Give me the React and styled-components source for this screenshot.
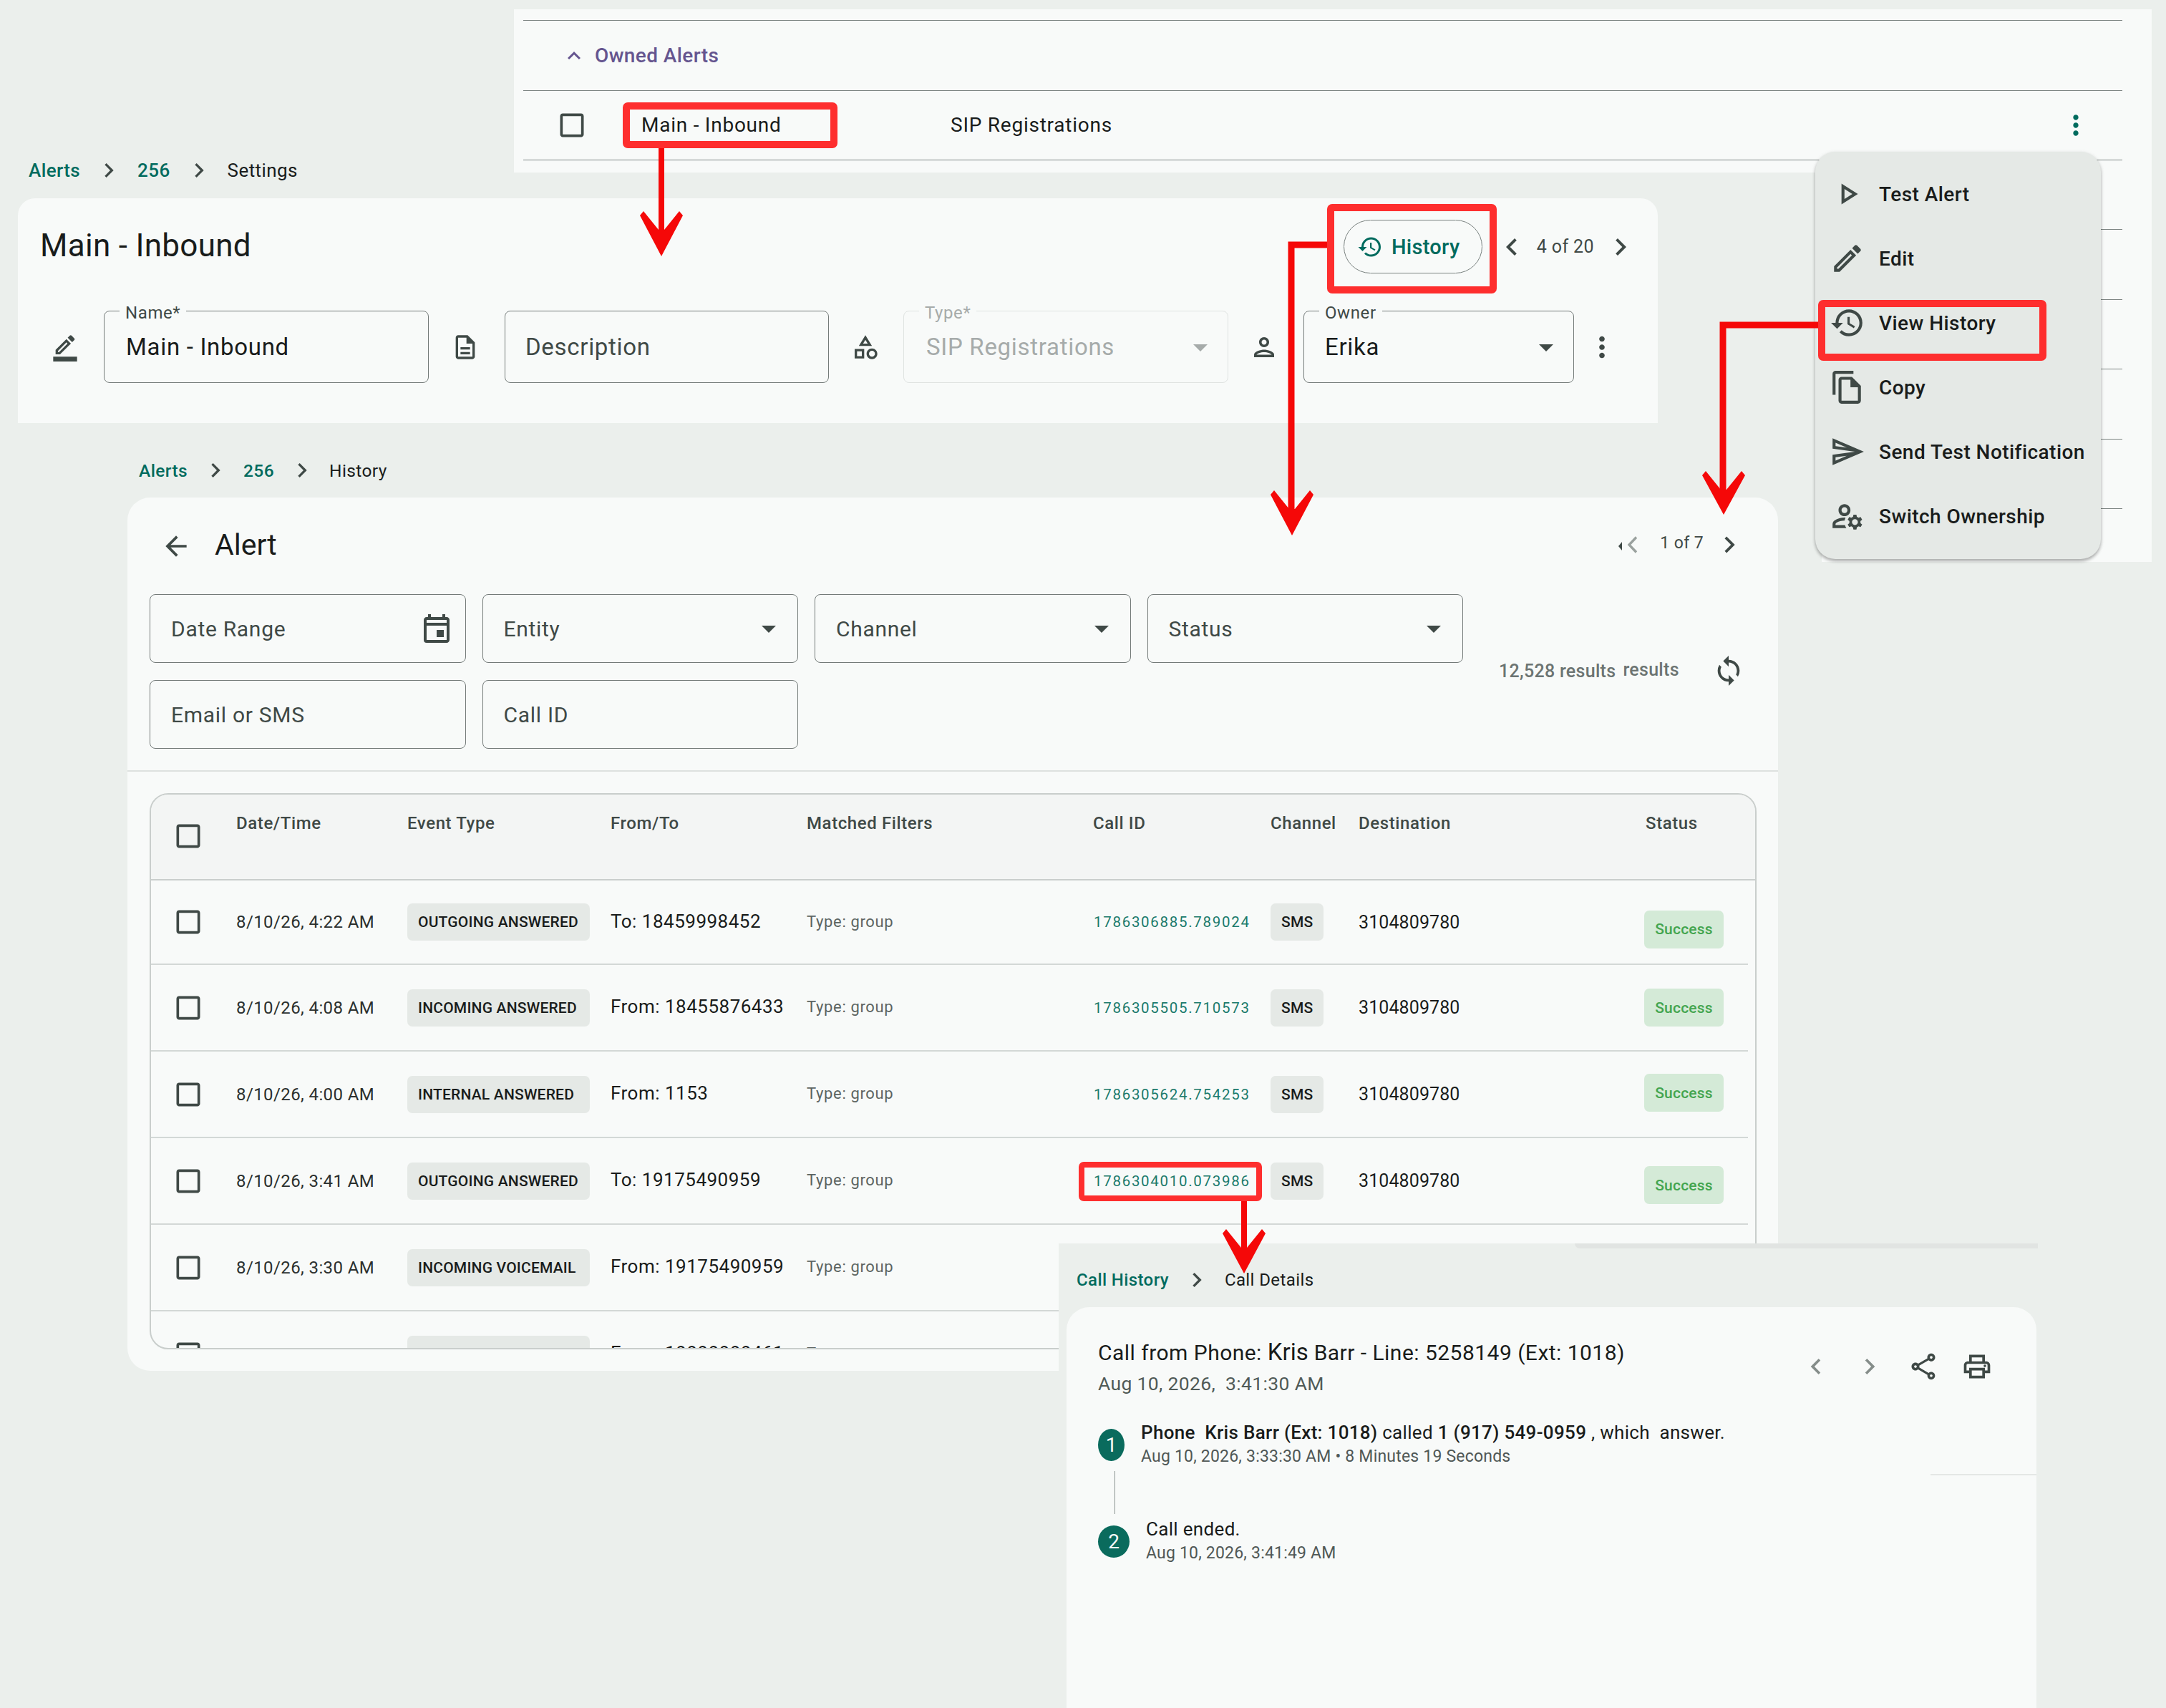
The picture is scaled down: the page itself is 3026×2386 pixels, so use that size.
import React from 'react';
import styled, { createGlobalStyle } from 'styled-components';
import {
  MdExpandLess, MdMoreVert, MdCheckBoxOutlineBlank, MdChevronLeft, MdChevronRight, MdHistory,
  MdOutlineBorderColor, MdOutlineDescription, MdOutlineCategory, MdOutlinePerson, MdArrowDropDown,
  MdArrowBack, MdOutlineEvent, MdSync, MdOutlineShare, MdOutlinePrint, MdOutlinePlayArrow, MdOutlineEdit,
  MdOutlineFileCopy, MdOutlineSend, MdOutlineManageAccounts,
} from 'react-icons/md';

const Global = createGlobalStyle`
  html, body { margin: 0; padding: 0; background: #ebefec; }
  body { font-family: Roboto, "Liberation Sans", sans-serif; color: #191c1b; }
  * { box-sizing: border-box; }
`;

const Canvas = styled.div`
  position: relative;
  width: 3026px;
  height: 2386px;
  overflow: hidden;
  background: #ebefec;
`;

/* Each window is a pasted screenshot on a free canvas */
const Window = styled.section`
  position: absolute;
  left: ${(p) => p.$x}px;
  top: ${(p) => p.$y}px;
  width: ${(p) => p.$w}px;
  height: ${(p) => p.$h}px;
  display: flex;
  flex-direction: column;
  background: ${(p) => p.$bg || 'transparent'};
`;

const Crumbs = styled.nav`
  display: flex;
  align-items: center;
  height: 44px;
  flex: none;
  font-size: ${(p) => p.$size || 26}px;
  letter-spacing: 0.4px;
  padding-left: ${(p) => p.$pad || 0}px;
  margin-top: ${(p) => p.$mt || 0}px;
  margin-bottom: ${(p) => p.$mb ?? 15}px;
`;
const CrumbLink = styled.span`
  color: #006b5e;
  font-weight: 500;
`;
const CrumbNow = styled.span`
  color: #191c1b;
`;
const CrumbSep = styled(MdChevronRight)`
  color: #3f4946;
  font-size: 40px;
  margin: 0 ${(p) => p.$m || 20}px;
`;

/* Owned alerts list */
const ListRule = styled.div`
  height: 16px;
  flex: none;
  margin: 0 41px 0 13px;
  border-bottom: 1.5px solid #7d8583;
`;
const SectionRow = styled.div`
  height: 98px;
  flex: none;
  margin: 0 41px 0 13px;
  display: flex;
  align-items: center;
  padding-left: 53px;
  gap: 11px;
  border-bottom: 1.5px solid #7d8583;
  color: #65558f;
  font-size: 28px;
  font-weight: 500;
  letter-spacing: 0.4px;
`;
const SectionCaret = styled(MdExpandLess)`
  font-size: 36px;
  color: #65558f;
`;
const ListRow = styled.div`
  height: 97px;
  flex: none;
  margin: 0 41px 0 13px;
  display: flex;
  align-items: center;
  border-bottom: 1.5px solid #7d8583;
  font-size: 28px;
  letter-spacing: 0.75px;
`;
const ListCheck = styled(MdCheckBoxOutlineBlank)`
  font-size: 44px;
  color: #3f4946;
  margin-left: 46px;
`;
const ListName = styled.span`
  margin: -2px 0 0 75px;
  width: 432px;
`;
const ListKind = styled.span`
  flex: 1;
  margin-top: -2px;
`;
const ListMore = styled(MdMoreVert)`
  font-size: 44px;
  color: #006b5e;
  margin-right: 43px;
`;
const TailRow = styled.div`
  height: ${(p) => (p.$first ? 80 : 97.5)}px;
  flex: none;
  margin-right: 41px;
  border-bottom: 1.5px solid #7d8583;
`;

/* Context menu */
const Menu = styled.ul`
  position: absolute;
  left: 2536px;
  top: 212px;
  width: 399px;
  height: 569px;
  margin: 0;
  padding: 14px 0;
  list-style: none;
  background: #e5e9e6;
  border-radius: 28px;
  box-shadow: 0 3px 4px rgba(0, 0, 0, 0.28), 0 1px 6px rgba(0, 0, 0, 0.08);
`;
const MenuItem = styled.li`
  height: 90px;
  display: flex;
  align-items: center;
  padding-left: 20px;
  gap: 19px;
  font-size: 28px;
  font-weight: 500;
  letter-spacing: 0.45px;
  color: #191c1b;
  & > svg {
    font-size: 50px;
    color: #3f4946;
    flex: none;
  }
`;

/* Panels */
const Panel = styled.div`
  background: #f8faf9;
  border-radius: ${(p) => p.$radius || '32px'};
  display: flex;
  flex-direction: column;
  flex: 1;
  min-height: 0;
  position: relative;
`;

const SettingsHead = styled.header`
  display: flex;
  align-items: center;
  justify-content: space-between;
  padding: 30px 28px 0 31px;
  height: 105px;
  flex: none;
`;
const SettingsTitle = styled.h1`
  margin: -3px 0 0;
  font-size: 44px;
  font-weight: 400;
  letter-spacing: 0.3px;
  color: #191c1b;
`;
const SettingsActions = styled.div`
  display: flex;
  align-items: center;
`;
const HistoryButton = styled.button`
  width: 194px;
  height: 75px;
  border: 1.5px solid #7a8280;
  border-radius: 38px;
  background: transparent;
  display: flex;
  align-items: center;
  justify-content: center;
  gap: 12px;
  padding: 0 12px 0 0;
  color: #006b5e;
  font-family: inherit;
  font-size: 29px;
  font-weight: 500;
  letter-spacing: 0.3px;
  margin-right: 17px;
  & > svg { font-size: 36px; }
`;
const PagerText = styled.span`
  font-size: ${(p) => p.$size || 25}px;
  letter-spacing: 0.4px;
  color: #3f4946;
  margin: ${(p) => p.$my || 0}px ${(p) => p.$mr || 13}px 0 ${(p) => p.$ml || 11}px;
`;
const Chevron = styled.span`
  display: flex;
  font-size: ${(p) => p.$size || 48}px;
  margin-top: ${(p) => p.$my || 0}px;
  color: ${(p) => (p.$muted ? '#8a918e' : '#3f4946')};
`;

const FieldRow = styled.div`
  display: flex;
  align-items: center;
  margin-top: 52px;
  padding-left: 11px;
`;
const FieldIcon = styled.span`
  width: ${(p) => p.$w || 105}px;
  flex: none;
  display: flex;
  justify-content: center;
  color: #3f4946;
  font-size: ${(p) => p.$size || 40}px;
  padding-right: ${(p) => p.$pr || 0}px;
`;
const Field = styled.div`
  position: relative;
  width: ${(p) => p.$w}px;
  height: ${(p) => p.$h || 101}px;
  flex: none;
  border: 1.5px solid ${(p) => (p.$disabled ? '#dfe3e1' : '#747b79')};
  border-radius: 8px;
  display: flex;
  align-items: center;
  justify-content: space-between;
  padding: 0 ${(p) => p.$padR || 14}px 0 ${(p) => p.$padL || 29}px;
  font-size: ${(p) => p.$fs || 30}px;
  letter-spacing: 0.7px;
  color: ${(p) => (p.$disabled ? '#a6abaa' : p.$placeholder ? '#3f4946' : '#191c1b')};
  & > svg { font-size: ${(p) => p.$icon || 48}px; flex: none; color: ${(p) => (p.$disabled ? '#a6abaa' : '#3f4946')}; }
`;
const FieldLabel = styled.span`
  position: absolute;
  left: 21px;
  top: -11px;
  padding: 0 8px;
  background: #f8faf9;
  font-size: 24px;
  line-height: 26px;
  letter-spacing: 0.6px;
  color: ${(p) => (p.$disabled ? '#a6abaa' : '#3f4946')};
`;
const RowMore = styled(MdMoreVert)`
  font-size: 46px;
  color: #3f4946;
  margin-left: 16px;
`;

/* History */
const HistoryHead = styled.header`
  height: 135px;
  flex: none;
  display: flex;
  align-items: center;
  padding: 0 45px 0 46px;
`;
const BackIcon = styled(MdArrowBack)`
  font-size: 44px;
  color: #3f4946;
  margin-right: 32px;
`;
const HistoryTitle = styled.h2`
  margin: -4px 0 0;
  font-size: 41px;
  font-weight: 400;
  flex: 1;
`;
const FilterArea = styled.div`
  display: flex;
  padding-left: 31px;
  flex: none;
`;
const FilterGrid = styled.div`
  display: grid;
  grid-template-columns: repeat(4, 441.5px);
  grid-auto-rows: 96px;
  gap: 24px 23px;
  width: 1835px;
`;
const ResultBar = styled.div`
  display: flex;
  align-items: center;
  height: 46px;
  margin: 84px 0 0 50px;
  color: #6c7472;
  font-size: 25px;
  font-weight: 500;
  letter-spacing: 0.3px;
  & > svg { font-size: 46px; color: #3f4946; margin-left: 46px; }
`;
const ResultSub = styled.span`
  margin: -4px 0 0 10px;
  font-weight: 500;
  letter-spacing: 0.3px;
`;
const Divider = styled.hr`
  width: 100%;
  height: 2px;
  border: 0;
  margin: 30px 0;
  flex: none;
  background: #dde1df;
`;
const TableCard = styled.div`
  margin-left: 31px;
  width: 2245px;
  height: 777px;
  flex: none;
  border: 2px solid #c9cecc;
  border-radius: 26px;
  overflow: hidden;
`;
const cols = '119px 239px 284px 274px 400px 248px 123px 399px 150px';
const HeadRow = styled.div`
  display: grid;
  grid-template-columns: ${cols};
  height: 120px;
  background: #f3f5f4;
  border-bottom: 2px solid #c9cecc;
  font-size: 24px;
  font-weight: 500;
  letter-spacing: 0.6px;
  color: #3f4946;
`;
const HeadCell = styled.div`
  padding-top: 26px;
  line-height: 28px;
  &:last-child { padding-left: 2px; }
`;
const HeadCheck = styled(MdCheckBoxOutlineBlank)`
  font-size: 44px;
  color: #3f4946;
  margin: 36px 0 0 30px;
`;
const BodyRow = styled.div`
  display: grid;
  grid-template-columns: ${cols};
  align-items: center;
  height: ${(p) => (p.$first ? 118 : 121)}px;
  width: 2231px;
  border-bottom: 2px solid #d3d8d6;
  font-size: 24px;
`;
const RowCheck = styled(MdCheckBoxOutlineBlank)`
  font-size: 44px;
  color: #3f4946;
  margin-left: 30px;
`;
const DateCell = styled.div`
  color: #2b302e;
  letter-spacing: 0.4px;
`;
const Chip = styled.div`
  justify-self: start;
  height: 52px;
  width: ${(p) => p.$w}px;
  border-radius: 7px;
  background: #e5e9e6;
  display: flex;
  align-items: center;
  padding-left: 15px;
  font-size: 21px;
  font-weight: 500;
  letter-spacing: 0.2px;
  color: #191c1b;
`;
const FromCell = styled.div`
  font-size: 26px;
  letter-spacing: 0.5px;
  margin-top: -3px;
  white-space: nowrap;
`;
const FilterCell = styled.div`
  font-size: 22px;
  letter-spacing: 0.65px;
  color: #5c6462;
  margin-top: -2px;
`;
const CallCell = styled.div`
  font-size: 20.5px;
  letter-spacing: 1.7px;
  padding-left: 1px;
  font-variant-numeric: tabular-nums;
  color: #1b7a6c;
`;
const DestCell = styled.div`
  font-size: 25px;
  color: #191c1b;
  letter-spacing: 0.1px;
`;
const SuccessChip = styled.div`
  justify-self: start;
  width: 111px;
  height: 53px;
  border-radius: 7px;
  background: #d4ead7;
  color: #43a54f;
  font-size: 21px;
  font-weight: 500;
  letter-spacing: 0.2px;
  display: flex;
  align-items: center;
  justify-content: center;
  transform: translateY(${(p) => p.$shift || 0}px);
`;

/* Call details */
const DetailBand = styled.div`
  position: absolute;
  left: 721px;
  top: 0;
  width: 647px;
  height: 7px;
  background: #e1e4e2;
  border-radius: 0 0 0 12px;
`;
const DetailPanel = styled(Panel)`
  margin-left: 11px;
  width: 1355px;
  flex: none;
  height: 560px;
  border-radius: 32px 32px 0 0;
`;
const DetailHead = styled.div`
  display: flex;
  justify-content: space-between;
  padding: 41px 61px 0 44px;
`;
const DetailTitle = styled.div`
  font-size: 30px;
  line-height: 44px;
  letter-spacing: 0.47px;
  color: #191c1b;
`;
const DetailName = styled.span`
  font-size: 33px;
  letter-spacing: 0;
`;
const DetailDate = styled.div`
  font-size: 26.5px;
  line-height: 40px;
  margin-top: 1px;
  letter-spacing: 0.35px;
  color: #505a57;
  white-space: pre;
`;
const DetailTools = styled.div`
  display: flex;
  gap: 31px;
  margin-top: 20px;
  height: 44px;
`;
const ToolIcon = styled.span`
  display: flex;
  font-size: 44px;
  color: ${(p) => (p.$muted ? '#858d8a' : '#3f4946')};
`;
const Step = styled.div`
  display: flex;
  align-items: center;
  height: 68px;
  margin-left: 44px;
  margin-top: ${(p) => p.$mt || 0}px;
`;
const StepDot = styled.span`
  width: ${(p) => p.$w}px;
  height: 45px;
  flex: none;
  border-radius: 50%;
  background: #0a6b5d;
  color: #f8faf9;
  font-size: 28px;
  display: flex;
  align-items: center;
  justify-content: center;
  margin-right: 23px;
`;
const StepBody = styled.div`
  display: flex;
  flex-direction: column;
`;
const StepText = styled.div`
  font-size: 26px;
  line-height: 34px;
  letter-spacing: 0.32px;
  color: #191c1b;
  white-space: pre;
`;
const StepStrong = styled.span`
  font-weight: 500;
`;
const StepSub = styled.div`
  font-size: 23px;
  line-height: 34px;
  letter-spacing: 0.2px;
  color: #505856;
`;
const Connector = styled.div`
  width: 1.2px;
  height: 60px;
  margin: 3px 0 4px 67px;
  background: #8c9491;
`;
const DetailRule = styled.div`
  position: absolute;
  left: 1207px;
  top: 233px;
  width: 148px;
  height: 2px;
  background: #e4e7e5;
`;

/* Annotations */
const Callout = styled.div`
  position: absolute;
  left: ${(p) => p.$x}px;
  top: ${(p) => p.$y}px;
  width: ${(p) => p.$w}px;
  height: ${(p) => p.$h}px;
  border: ${(p) => p.$t || 10}px solid #fe2e2e;
  border-radius: 7px;
  pointer-events: none;
`;
const ArrowLayer = styled.svg`
  position: absolute;
  left: 0;
  top: 0;
  width: 3026px;
  height: 2386px;
  pointer-events: none;
`;

const head = (x, hy, tip) =>
  `${x - 30},${hy + 6} ${x - 25},${hy} ${x - 4},${hy + 26} ${x + 4},${hy + 26} ${x + 25},${hy} ${x + 30},${hy + 6} ${x},${tip}`;

const rows = [
  { date: '8/10/26, 4:22 AM', type: 'OUTGOING ANSWERED', ft: 'To: 18459998452', id: '1786306885.789024', shift: 10 },
  { date: '8/10/26, 4:08 AM', type: 'INCOMING ANSWERED', ft: 'From: 18455876433', id: '1786305505.710573', shift: 0 },
  { date: '8/10/26, 4:00 AM', type: 'INTERNAL ANSWERED', ft: 'From: 1153', id: '1786305624.754253', shift: -2 },
  { date: '8/10/26, 3:41 AM', type: 'OUTGOING ANSWERED', ft: 'To: 19175490959', id: '1786304010.073986', shift: 6 },
  { date: '8/10/26, 3:30 AM', type: 'INCOMING VOICEMAIL', ft: 'From: 19175490959' },
  { date: '8/10/26, 3:07 AM', type: 'INCOMING MISSED', ft: 'From: 18888888461' },
];

const menu = [
  [MdOutlinePlayArrow, 'Test Alert'],
  [MdOutlineEdit, 'Edit'],
  [MdHistory, 'View History'],
  [MdOutlineFileCopy, 'Copy'],
  [MdOutlineSend, 'Send Test Notification'],
  [MdOutlineManageAccounts, 'Switch Ownership'],
];

export default function App() {
  return (
    <Canvas>
      <Global />

      <Window $x={718} $y={13} $w={2288} $h={228} $bg="#f8faf9">
        <ListRule />
        <SectionRow>
          <SectionCaret />
          Owned Alerts
        </SectionRow>
        <ListRow>
          <ListCheck />
          <ListName>Main - Inbound</ListName>
          <ListKind>SIP Registrations</ListKind>
          <ListMore />
        </ListRow>
      </Window>
      <Window $x={2545} $y={241} $w={461} $h={544} $bg="#f8faf9">
        <TailRow $first />
        <TailRow />
        <TailRow />
        <TailRow />
        <TailRow />
      </Window>

      <Window $x={25} $y={216} $w={2291} $h={375}>
        <Crumbs $pad={15} $mb={17}>
          <CrumbLink>Alerts</CrumbLink>
          <CrumbSep />
          <CrumbLink>256</CrumbLink>
          <CrumbSep />
          <CrumbNow>Settings</CrumbNow>
        </Crumbs>
        <Panel $radius="24px 24px 0 0">
          <SettingsHead>
            <SettingsTitle>Main - Inbound</SettingsTitle>
            <SettingsActions>
              <HistoryButton>
                <MdHistory />
                History
              </HistoryButton>
              <Chevron><MdChevronLeft /></Chevron>
              <PagerText>4 of 20</PagerText>
              <Chevron><MdChevronRight /></Chevron>
            </SettingsActions>
          </SettingsHead>
          <FieldRow>
            <FieldIcon $w={109}><MdOutlineBorderColor /></FieldIcon>
            <Field $w={454} $padL={30} $fs={33}>
              <FieldLabel>Name*</FieldLabel>
              Main - Inbound
            </Field>
            <FieldIcon $w={106} $pr={4}><MdOutlineDescription /></FieldIcon>
            <Field $w={453} $padL={28} $fs={33} $placeholder>Description</Field>
            <FieldIcon $w={104} $pr={2}><MdOutlineCategory /></FieldIcon>
            <Field $w={454} $disabled $padL={31} $fs={33}>
              <FieldLabel $disabled>Type*</FieldLabel>
              SIP Registrations
              <MdArrowDropDown />
            </Field>
            <FieldIcon $size={42} $pr={6}><MdOutlinePerson /></FieldIcon>
            <Field $w={378} $fs={33}>
              <FieldLabel>Owner</FieldLabel>
              Erika
              <MdArrowDropDown />
            </Field>
            <RowMore />
          </FieldRow>
        </Panel>
      </Window>

      <Window $x={178} $y={635} $w={2306} $h={1280}>
        <Crumbs $pad={16} $size={24.5} $mb={16}>
          <CrumbLink>Alerts</CrumbLink>
          <CrumbSep $m={19} />
          <CrumbLink>256</CrumbLink>
          <CrumbSep $m={18.5} />
          <CrumbNow>History</CrumbNow>
        </Crumbs>
        <Panel>
          <HistoryHead>
            <BackIcon />
            <HistoryTitle>Alert</HistoryTitle>
            <Chevron $my={-4}>
              <svg width="46" height="46" viewBox="0 0 46 46">
                <path d="M3 25l5-6v12z" fill="#3f4946" />
                <path d="M28 12.500L18 23l10 10.500" fill="none" stroke="#9aa19e" strokeWidth="3.4" />
              </svg>
            </Chevron>
            <PagerText $size={23} $ml={15} $mr={13} $my={-8}>1 of 7</PagerText>
            <Chevron $my={-4} $size={46}><MdChevronRight /></Chevron>
          </HistoryHead>
          <FilterArea>
            <FilterGrid>
              <Field $w={441.5} $h={96} $placeholder $padR={16}>
                Date Range
                <MdOutlineEvent />
              </Field>
              <Field $w={441.5} $h={96} $placeholder $padR={16}>Entity<MdArrowDropDown /></Field>
              <Field $w={441.5} $h={96} $placeholder $padR={16}>Channel<MdArrowDropDown /></Field>
              <Field $w={441.5} $h={96} $placeholder $padR={16}>Status<MdArrowDropDown /></Field>
              <Field $w={441.5} $h={96} $placeholder>Email or SMS</Field>
              <Field $w={441.5} $h={96} $placeholder>Call ID</Field>
            </FilterGrid>
            <ResultBar>
              12,528 results
              <ResultSub>results</ResultSub>
              <MdSync />
            </ResultBar>
          </FilterArea>
          <Divider />
          <TableCard>
            <HeadRow>
              <HeadCheck />
              <HeadCell>Date/Time</HeadCell>
              <HeadCell>Event Type</HeadCell>
              <HeadCell>From/To</HeadCell>
              <HeadCell>Matched Filters</HeadCell>
              <HeadCell>Call ID</HeadCell>
              <HeadCell>Channel</HeadCell>
              <HeadCell>Destination</HeadCell>
              <HeadCell>Status</HeadCell>
            </HeadRow>
            {rows.map((r, i) => (
              <BodyRow key={r.date} $first={i === 0}>
                <RowCheck />
                <DateCell>{r.date}</DateCell>
                <Chip $w={255}>{r.type}</Chip>
                <FromCell>{r.ft}</FromCell>
                <FilterCell>Type: group</FilterCell>
                {r.id && <CallCell>{r.id}</CallCell>}
                {r.id && <Chip $w={74}>SMS</Chip>}
                {r.id && <DestCell>3104809780</DestCell>}
                {r.id && <SuccessChip $shift={r.shift}>Success</SuccessChip>}
              </BodyRow>
            ))}
          </TableCard>
        </Panel>
      </Window>

      <Window $x={1479} $y={1737} $w={1547} $h={649} $bg="#ebefec">
        <DetailBand />
        <Crumbs $pad={25} $size={24} $mt={29} $mb={16}>
          <CrumbLink>Call History</CrumbLink>
          <CrumbSep $m={19} />
          <CrumbNow>Call Details</CrumbNow>
        </Crumbs>
        <DetailPanel>
          <DetailRule />
          <DetailHead>
            <div>
              <DetailTitle>Call from Phone: <DetailName>Kris</DetailName> Barr - Line: 5258149 (Ext: 1018)</DetailTitle>
              <DetailDate>Aug 10, 2026,  3:41:30 AM</DetailDate>
            </div>
            <DetailTools>
              <ToolIcon $muted><MdChevronLeft /></ToolIcon>
              <ToolIcon $muted><MdChevronRight /></ToolIcon>
              <ToolIcon><MdOutlineShare /></ToolIcon>
              <ToolIcon><MdOutlinePrint /></ToolIcon>
            </DetailTools>
          </DetailHead>
          <Step $mt={31}>
            <StepDot $w={37}>1</StepDot>
            <StepBody>
              <StepText><StepStrong>Phone  Kris Barr (Ext: 1018)</StepStrong> called <StepStrong>1 (917) 549-0959</StepStrong> , which  answer.</StepText>
              <StepSub>Aug 10, 2026, 3:33:30 AM • 8 Minutes 19 Seconds</StepSub>
            </StepBody>
          </Step>
          <Connector />
          <Step>
            <StepDot $w={44}>2</StepDot>
            <StepBody>
              <StepText>Call ended.</StepText>
              <StepSub>Aug 10, 2026, 3:41:49 AM</StepSub>
            </StepBody>
          </Step>
        </DetailPanel>
      </Window>

      <Menu>
        {menu.map(([Icon, label]) => (
          <MenuItem key={label}>
            <Icon />
            {label}
          </MenuItem>
        ))}
      </Menu>

      <ArrowLayer viewBox="0 0 3026 2386">
        <g fill="none" stroke="#f50808" strokeWidth="8">
          <path d="M924 205V330" />
          <path d="M1858 342H1804V720" strokeWidth="9" />
          <path d="M2545 454H2407V690" strokeWidth="9" />
          <path d="M1738 1676V1750" />
        </g>
        <g fill="#f50808">
          <polygon points={head(924, 295, 358)} />
          <polygon points={head(1805, 685, 748)} />
          <polygon points={head(2408, 658, 719)} />
          <polygon points={head(1738, 1717, 1779)} />
        </g>
      </ArrowLayer>
      <Callout $x={870} $y={143} $w={300} $h={64} />
      <Callout $x={1854} $y={285} $w={237} $h={125} />
      <Callout $x={2540} $y={419} $w={319} $h={85} />
      <Callout $x={1507} $y={1623} $w={256} $h={55} $t={8} />
    </Canvas>
  );
}
